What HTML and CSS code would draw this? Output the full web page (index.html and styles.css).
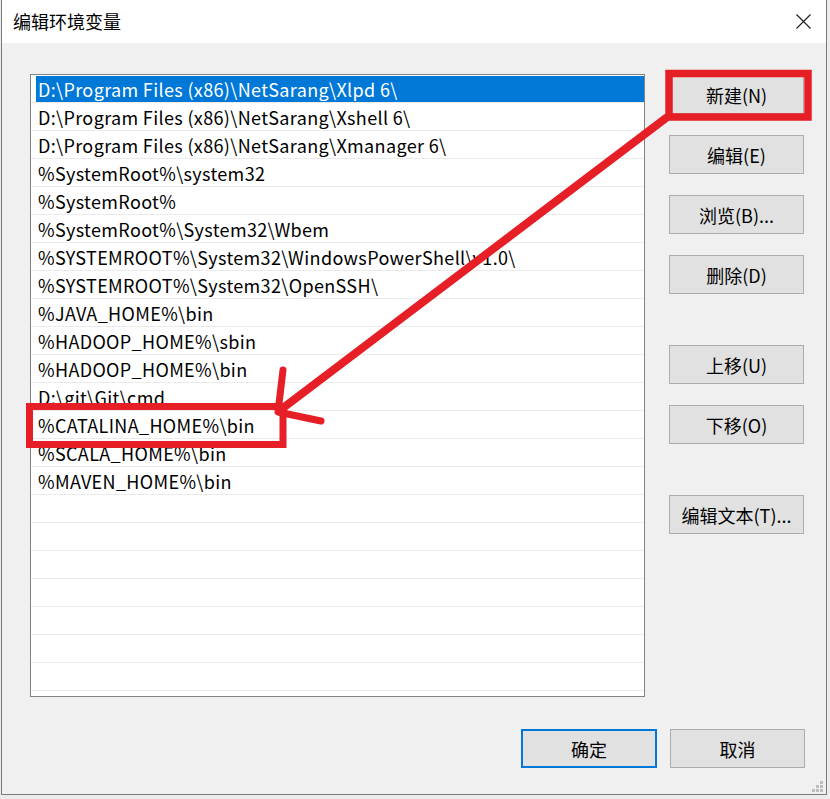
FILE: index.html
```html
<!DOCTYPE html>
<html lang="zh-CN">
<head>
  <meta charset="UTF-8" />
  <title>编辑环境变量</title>
  <link rel="stylesheet" href="styles.css">
</head>
<body>
  <div class="screen">
    <div class="dialog">
      <div class="titlebar">
        <span class="title">编辑环境变量</span>
        <span class="close">
          <svg width="15" height="15" viewBox="0 0 15 15"><path d="M0.5 0.5 L14.5 14.5 M14.5 0.5 L0.5 14.5" stroke="#1a1a1a" stroke-width="1.1" fill="none"/></svg>
        </span>
      </div>
      <div class="content">
        <div class="main">
          <div class="listbox">
            <div class="row"><div class="cell selected">D:\Program Files (x86)\NetSarang\Xlpd 6\</div></div>
            <div class="row"><div class="cell">D:\Program Files (x86)\NetSarang\Xshell 6\</div></div>
            <div class="row"><div class="cell">D:\Program Files (x86)\NetSarang\Xmanager 6\</div></div>
            <div class="row"><div class="cell">%SystemRoot%\system32</div></div>
            <div class="row"><div class="cell">%SystemRoot%</div></div>
            <div class="row"><div class="cell">%SystemRoot%\System32\Wbem</div></div>
            <div class="row"><div class="cell">%SYSTEMROOT%\System32\WindowsPowerShell\v1.0\</div></div>
            <div class="row"><div class="cell">%SYSTEMROOT%\System32\OpenSSH\</div></div>
            <div class="row"><div class="cell">%JAVA_HOME%\bin</div></div>
            <div class="row"><div class="cell">%HADOOP_HOME%\sbin</div></div>
            <div class="row"><div class="cell">%HADOOP_HOME%\bin</div></div>
            <div class="row"><div class="cell">D:\git\Git\cmd</div></div>
            <div class="row"><div class="cell">%CATALINA_HOME%\bin</div></div>
            <div class="row"><div class="cell">%SCALA_HOME%\bin</div></div>
            <div class="row"><div class="cell">%MAVEN_HOME%\bin</div></div>
            <div class="row"><div class="cell"></div></div>
            <div class="row"><div class="cell"></div></div>
            <div class="row"><div class="cell"></div></div>
            <div class="row"><div class="cell"></div></div>
            <div class="row"><div class="cell"></div></div>
            <div class="row"><div class="cell"></div></div>
            <div class="row"><div class="cell"></div></div>
            <div class="row"><div class="cell"></div></div>
          </div>
          <div class="side">
            <button class="btn">新建(N)</button>
            <button class="btn">编辑(E)</button>
            <button class="btn">浏览(B)...</button>
            <button class="btn">删除(D)</button>
            <button class="btn spaced">上移(U)</button>
            <button class="btn">下移(O)</button>
            <button class="btn spaced">编辑文本(T)...</button>
          </div>
        </div>
        <div class="footer">
          <button class="btn primary">确定</button>
          <button class="btn">取消</button>
        </div>
      </div>
      <svg class="grip" width="11" height="11" viewBox="0 0 11 11">
        <rect x="8" y="0" width="3" height="3"/>
        <rect x="4" y="4" width="3" height="3"/>
        <rect x="8" y="4" width="3" height="3"/>
        <rect x="0" y="8" width="3" height="3"/>
        <rect x="4" y="8" width="3" height="3"/>
        <rect x="8" y="8" width="3" height="3"/>
      </svg>
    </div>

    <!-- red annotation drawn on top of the screenshot -->
    <svg class="marks" width="830" height="799" viewBox="0 0 830 799">
      <g fill="none" stroke="#e61e26">
        <rect x="669" y="73.5" width="139" height="43.5" stroke-width="7.5"/>
        <rect x="29.5" y="406.5" width="253.5" height="38" stroke-width="7"/>
        <line x1="666" y1="118" x2="279" y2="411" stroke-width="8" stroke-linecap="round"/>
        <path d="M283 370 L278 412 L321 421" stroke-width="7" stroke-linecap="round" stroke-linejoin="round"/>
      </g>
    </svg>
  </div>
</body>
</html>
```

FILE: styles.css
```css
* { margin: 0; padding: 0; box-sizing: border-box; }
body {
  font-family: "Noto Sans CJK SC", sans-serif;
  color: #000;
  background: #e9e9e9;
}
.screen {
  position: relative;
  width: 830px;
  height: 799px;
  overflow: hidden;
  background: #ececec;
}
.dialog {
  position: relative;
  margin-left: 1px;
  width: 826px;
  height: 795px;
  border: 1px solid #7a7a7a;
  border-top: none;
  background: #f0f0f0;
}
.titlebar {
  height: 43px;
  background: #fff;
  display: flex;
  align-items: center;
  justify-content: space-between;
  padding-left: 11px;
}
.title { font-size: 18px; line-height: 43px; }
.close {
  width: 45px;
  height: 43px;
  display: flex;
  align-items: center;
  justify-content: center;
}
.close svg { display: block; }
.content {
  padding: 31px 21px 26px 28px;
}
.main {
  display: flex;
  gap: 24px;
}
.listbox {
  width: 615px;
  height: 623px;
  border: 1px solid #828282;
  background: #fff;
  overflow: hidden;
}
.row {
  height: 28px;
  padding: 1px 0 1px 5px;
  border-bottom: 1px solid #ebebeb;
}
.cell {
  height: 26px;
  line-height: 26px;
  padding-left: 2px;
  font-size: 18px;
  letter-spacing: 0.35px;
  white-space: nowrap;
}
.cell.selected { background: #0078d7; color: #fff; }
.side {
  width: 135px;
  padding-top: 1px;
  display: flex;
  flex-direction: column;
  gap: 21px;
}
.side .spaced { margin-top: 30px; }
.btn {
  width: 135px;
  height: 39px;
  background: #e1e1e1;
  border: 1px solid #adadad;
  font-family: "Noto Sans CJK SC", sans-serif;
  font-size: 18px;
  color: #000;
  line-height: 1;
}
.footer {
  margin-top: 32px;
  display: flex;
  justify-content: flex-end;
  gap: 13px;
}
.btn.primary {
  width: 136px;
  border: 2px solid #0078d7;
}
.grip {
  position: absolute;
  right: 3px;
  bottom: 2px;
  fill: #bdbdbd;
}
.marks {
  position: absolute;
  top: 0;
  left: 0;
  pointer-events: none;
}
```
